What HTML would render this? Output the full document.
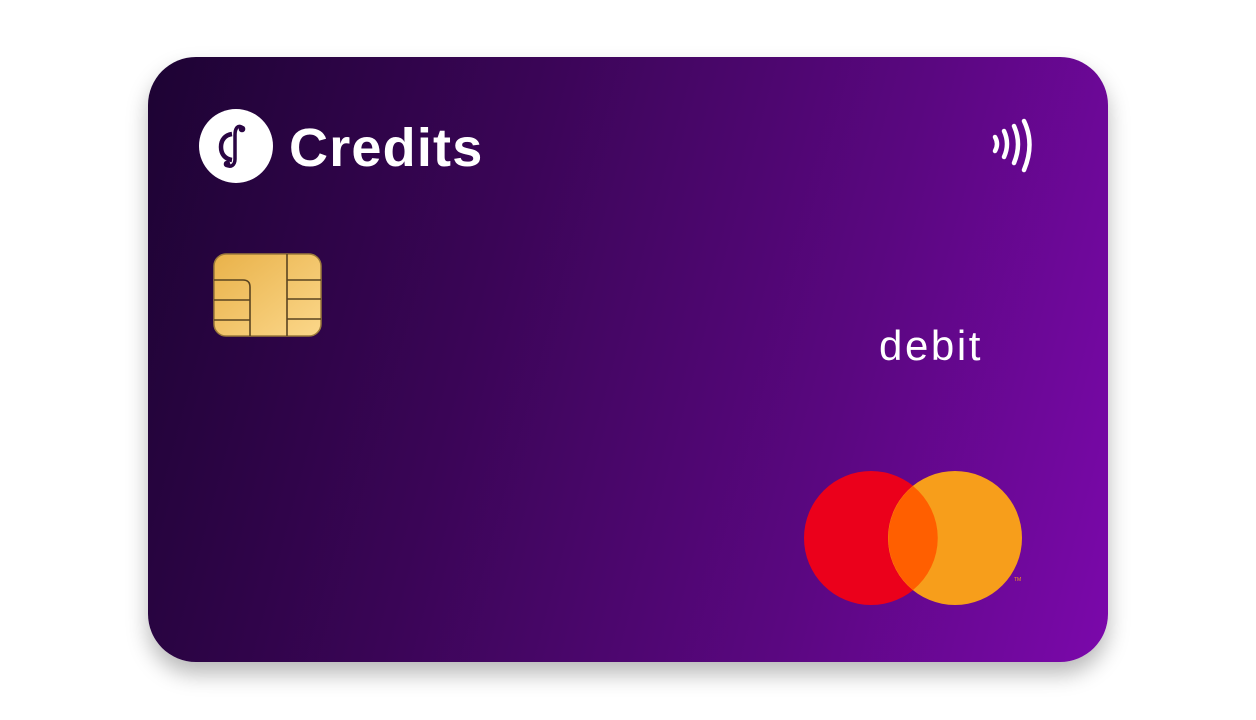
<!DOCTYPE html>
<html><head><style>
body{margin:0;width:1256px;height:720px;background:#fff;position:relative;overflow:hidden;font-family:"Liberation Sans",sans-serif}
.card{position:absolute;left:148px;top:57px;width:960px;height:605px;border-radius:48px;background:linear-gradient(105deg,#1d0333 0%,#3a0556 35%,#5a0780 70%,#7b08ab 100%);box-shadow:0 12px 22px rgba(0,0,0,0.28)}
.logo{position:absolute;left:199px;top:109px;width:74px;height:74px;border-radius:50%;background:#fff}
.brand{position:absolute;left:289px;top:117px;font-size:54px;font-weight:bold;color:#fff;letter-spacing:1.2px}
.debit{position:absolute;left:879px;top:322px;font-size:42px;color:#fff;letter-spacing:2.6px}
</style></head><body>
<div class="card"></div>
<div class="logo"><svg width="74" height="74" viewBox="0 0 74 74">
<path d="M33 25 C26 26 22 31 22 38 C22 45 26 50 33 51" fill="none" stroke="#2a0543" stroke-width="4.5"/>
<path d="M44 19 C39 15 36 19 36 26 L36 50 C36 56 32 59 27 56" fill="none" stroke="#2a0543" stroke-width="3.5"/>
<circle cx="43" cy="20" r="3.3" fill="#2a0543"/><circle cx="28" cy="55" r="3.3" fill="#2a0543"/>
</svg></div>
<div class="brand">Credits</div>
<svg style="position:absolute;left:988px;top:116px" width="50" height="62" viewBox="0 0 50 62">
<g fill="none" stroke="#fff" stroke-width="4.5" stroke-linecap="round">
<path d="M7 21 Q11 28 7 35"/><path d="M16 15 Q22 28 16 41"/><path d="M26 10 Q34 28 26 47"/><path d="M36 5 Q47 28 36 54"/></g></svg>
<svg style="position:absolute;left:213px;top:253px" width="110" height="85" viewBox="0 0 110 85">
<defs><linearGradient id="g" x1="0" y1="0" x2="1" y2="1"><stop offset="0" stop-color="#e9b24a"/><stop offset="1" stop-color="#fbd78a"/></linearGradient></defs>
<rect x="1" y="1" width="107" height="82" rx="12" fill="url(#g)" stroke="#9c7a3b" stroke-width="1.5"/>
<g fill="none" stroke="#5a4420" stroke-width="1.6">
<path d="M1 27 H30 Q37 27 37 34 V83"/><path d="M1 47 H37"/><path d="M1 67 H37"/>
<path d="M74 1 V83"/><path d="M74 27 H108"/><path d="M74 46 H108"/><path d="M74 66 H108"/></g></svg>
<div class="debit">debit</div>
<svg style="position:absolute;left:800px;top:468px" width="230" height="142" viewBox="0 0 230 142">
<circle cx="71" cy="70" r="67" fill="#eb001b"/><circle cx="155" cy="70" r="67" fill="#f79e1b"/>
<path d="M113 18 A67 67 0 0 1 113 122 A67 67 0 0 1 113 18Z" fill="#ff5f00"/>
<text x="214" y="113" font-size="5" fill="#f79e1b">TM</text></svg>
</body></html>
